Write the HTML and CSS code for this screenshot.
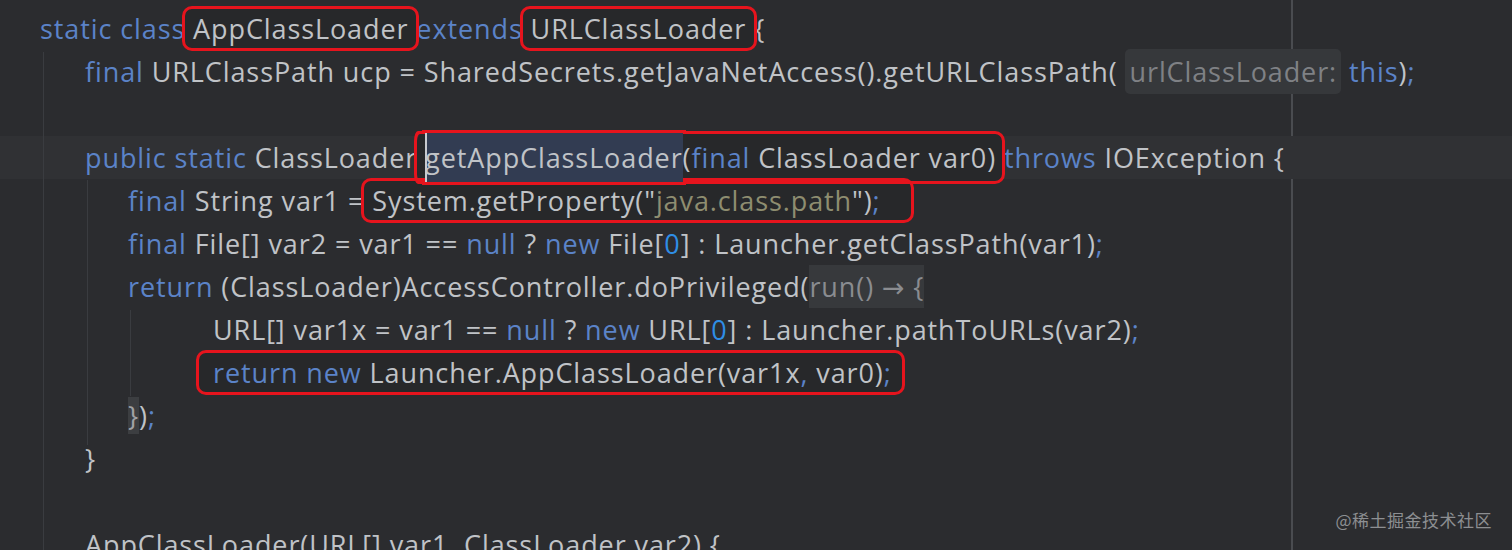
FILE: index.html
```html
<!DOCTYPE html>
<html>
<head>
<meta charset="utf-8">
<link rel="stylesheet" href="styles.css">
</head>
<body>
<div class="editor">
  <div class="guide g1"></div>
  <div class="guide g2"></div>
  <div class="guide g3"></div>
  <div class="line i0"><span class="kw">static class</span><span class="box b1"> AppClassLoader </span><span class="kw">extends</span><span class="box b2"> URLClassLoader </span>{</div>
  <div class="line i1"><span class="kw">final</span> URLClassPath ucp = SharedSecrets.getJavaNetAccess().getURLClassPath( <span class="hint">urlClassLoader:</span> <span class="kw">this</span>)<span class="kw">;</span></div>
  <div class="line i1"></div>
  <div class="line i1 current"><span class="kw">public static</span> ClassLoader<span class="box b3"> <span class="sel"><span class="caret"></span>getAppClassLoader</span>(<span class="kw">final</span> ClassLoader var0)</span> <span class="kw">throws</span> IOException {</div>
  <div class="line i2"><span class="kw">final</span> String var1 = <span class="box b4">System.getProperty(&quot;<span class="str">java.class.path</span>&quot;)<span class="kw">;</span></span></div>
  <div class="line i2"><span class="kw">final</span> File[] var2 = var1 == <span class="kw">null</span> ? <span class="kw">new</span> File[<span class="num">0</span>] : Launcher.getClassPath(var1)<span class="kw">;</span></div>
  <div class="line i2"><span class="kw">return</span> (ClassLoader)AccessController.doPrivileged(<span class="fold">run() → {</span></div>
  <div class="line i3">URL[] var1x = var1 == <span class="kw">null</span> ? <span class="kw">new</span> URL[<span class="num">0</span>] : Launcher.pathToURLs(var2)<span class="kw">;</span></div>
  <div class="line i3"><span class="box b5"><span class="kw">return new</span> Launcher.AppClassLoader(var1x<span class="kw">,</span> var0)<span class="kw">;</span></span></div>
  <div class="line i2"><span class="brace">}</span>)<span class="kw">;</span></div>
  <div class="line i1">}</div>
  <div class="line i1"></div>
  <div class="line i1">AppClassLoader(URL[] var1, ClassLoader var2) {</div>
  <div class="watermark">@稀土掘金技术社区</div>
</div>
</body>
</html>
```
FILE: styles.css
```css
html, body {
  margin: 0;
  padding: 0;
  background: #2b2c2f;
  overflow: hidden;
}
.editor {
  position: relative;
  width: 1512px;
  height: 550px;
  overflow: hidden;
  padding-top: 7px;
  box-sizing: border-box;
  background:
    linear-gradient(to right, transparent 1291px, #4a4c50 1291px, #4a4c50 1293px, transparent 1293px),
    #2b2c2f;
  font-family: "Open Sans", "DejaVu Sans", sans-serif;
  font-size: 27px;
  font-weight: 500;
  letter-spacing: 0.9px;
  color: #c0c3c7;
}
.line {
  height: 43px;
  line-height: 43px;
  white-space: pre;
}
.i0 { padding-left: 40px; }
.i1 { padding-left: 85px; }
.i2 { padding-left: 128px; }
.i3 { padding-left: 213px; }
.current { background: #303134; }
.kw { color: #5b83c8; }
.num { color: #2f8ee6; }
.str { color: #8e8d70; }
.hint {
  color: #7f8185;
  background: #36383b;
  border-radius: 5px;
  padding: 4px 4px;
  font-weight: 400;
}
.fold {
  color: #8a8c90;
  background: #37393c;
  padding: 3px 0;
}
.brace {
  color: #a0a2a6;
  background: #3c3e41;
}
.sel {
  position: relative;
  background: #323c52;
  padding: 6px 0;
}
.caret {
  position: absolute;
  left: 0;
  top: 0;
  bottom: 0;
  width: 2px;
  background: #c8cacf;
}
.box {
  outline: 3px solid #e6141d;
  outline-offset: 0;
  border-radius: 7px;
  background: #27282a;
  padding: 1px 0;
}
.b3 { padding: 5px 6px 5px 0; margin-right: -6px; }
.b4 { padding: 1px 30px 1px 8px; margin-left: -8px; }
.b5 { padding: 1px 10px 1px 14px; margin-left: -14px; }
.guide {
  position: absolute;
  width: 1px;
  background: #3a3c40;
}
.g1 { left: 43px; top: 52px; bottom: 0; }
.g2 { left: 87px; top: 180px; height: 265px; }
.g3 { left: 130px; top: 310px; height: 86px; }
.watermark {
  position: absolute;
  right: 20px;
  bottom: 18px;
  font-family: "Noto Sans CJK SC", sans-serif;
  font-size: 17px;
  font-weight: 400;
  color: #8d8f92;
  letter-spacing: 0.5px;
}
```
